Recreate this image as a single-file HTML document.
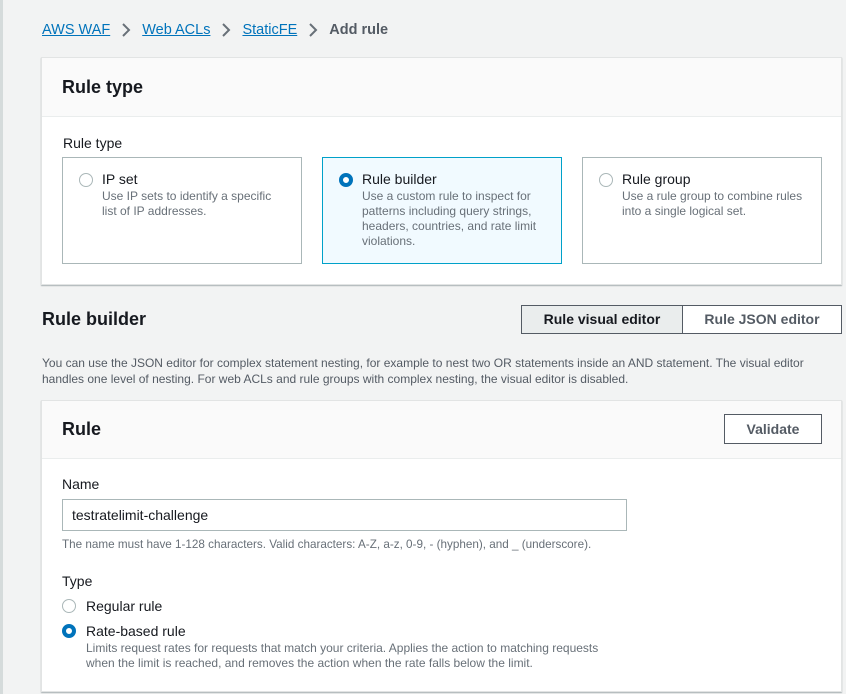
<!DOCTYPE html>
<html><head><style>
*{box-sizing:border-box;margin:0;padding:0}
body{width:846px;height:694px;overflow:hidden;background:#f2f3f3;font-family:"Liberation Sans",sans-serif;color:#16191f;position:relative}
.abs{position:absolute}
.lb{position:absolute;left:0;top:0;width:3px;height:694px;background:#d5dbdb}
.bc{left:42px;top:22px;font-size:14.5px;color:#0073bb;display:flex;align-items:center}
.bc a{text-decoration:underline;color:#0073bb}
.bc svg{margin:0 11px}
.bc b{color:#545b64}
.panel{background:#fff;border:1px solid #e2e4e4;box-shadow:0 1px 1px rgba(0,28,36,.3)}
.ph{background:#fafafa;border-bottom:1px solid #eaeded}
h2{font-size:18px;font-weight:bold}
.card{position:absolute;top:157px;width:240px;height:107px;border:1px solid #aab7b8;background:#fff}
.card.sel{border-color:#00a1c9;background:#f1faff}
.radio{position:absolute;width:14px;height:14px;border-radius:50%;border:1.5px solid #aab7b8;background:#fff}
.radio.on{border:4px solid #0073bb}
.ct{position:absolute;left:39px;top:13px;font-size:14px}
.cd{position:absolute;left:39px;top:31px;font-size:12px;color:#687078;line-height:15px;width:180px}
.btn{position:absolute;border:1px solid #545b64;font-size:14px;font-weight:bold;text-align:center;color:#545b64;background:#fff}
.small{font-size:12px;color:#687078}
</style></head><body>
<div class="lb"></div>
<div class="abs bc"><a>AWS WAF</a><svg width="10" height="14" viewBox="0 0 10 14"><path d="M2 1l6 6-6 6" fill="none" stroke="#687078" stroke-width="2"/></svg><a>Web ACLs</a><svg width="10" height="14" viewBox="0 0 10 14"><path d="M2 1l6 6-6 6" fill="none" stroke="#687078" stroke-width="2"/></svg><a>StaticFE</a><svg width="10" height="14" viewBox="0 0 10 14"><path d="M2 1l6 6-6 6" fill="none" stroke="#687078" stroke-width="2"/></svg><b>Add rule</b></div>

<div class="abs panel" style="left:41px;top:57px;width:801px;height:228px">
  <div class="ph" style="height:59px;padding:19px 20px"><h2>Rule type</h2></div>
  <div class="abs" style="left:21px;top:77px;font-size:14px">Rule type</div>
</div>
<div class="card" style="left:62px"><div class="radio" style="left:16px;top:15px"></div><div class="ct">IP set</div><div class="cd">Use IP sets to identify a specific list of IP addresses.</div></div>
<div class="card sel" style="left:322px"><div class="radio on" style="left:16px;top:15px"></div><div class="ct">Rule builder</div><div class="cd">Use a custom rule to inspect for patterns including query strings, headers, countries, and rate limit violations.</div></div>
<div class="card" style="left:582px"><div class="radio" style="left:16px;top:15px"></div><div class="ct">Rule group</div><div class="cd" style="width:195px">Use a rule group to combine rules into a single logical set.</div></div>

<div class="abs" style="left:42px;top:309px"><h2>Rule builder</h2></div>
<div class="btn" style="left:521px;top:305px;width:162px;height:29px;line-height:27px;background:#eaeded;color:#16191f">Rule visual editor</div>
<div class="btn" style="left:682px;top:305px;width:160px;height:29px;line-height:27px">Rule JSON editor</div>
<div class="abs small" style="left:42px;top:355px;width:800px;line-height:16px;color:#545b64">You can use the JSON editor for complex statement nesting, for example to nest two OR statements inside an AND statement. The visual editor handles one level of nesting. For web ACLs and rule groups with complex nesting, the visual editor is disabled.</div>

<div class="abs panel" style="left:41px;top:400px;width:801px;height:292px">
  <div class="ph" style="height:58px;padding:18px 20px"><h2>Rule</h2></div>
</div>
<div class="btn" style="left:724px;top:414px;width:98px;height:30px;line-height:28px">Validate</div>
<div class="abs" style="left:62px;top:476px;font-size:14px">Name</div>
<div class="abs" style="left:62px;top:499px;width:565px;height:32px;border:1px solid #aab7b8;background:#fff;font-size:14px;padding:7px 9px">testratelimit-challenge</div>
<div class="abs small" style="left:62px;top:538px;font-size:11.7px">The name must have 1-128 characters. Valid characters: A-Z, a-z, 0-9, - (hyphen), and _ (underscore).</div>
<div class="abs" style="left:62px;top:573px;font-size:14px">Type</div>
<div class="radio" style="left:62px;top:599px"></div>
<div class="abs" style="left:86px;top:598px;font-size:14px">Regular rule</div>
<div class="radio on" style="left:62px;top:624px"></div>
<div class="abs" style="left:86px;top:623px;font-size:14px">Rate-based rule</div>
<div class="abs small" style="left:86px;top:641px;line-height:15px;font-size:12px">Limits request rates for requests that match your criteria. Applies the action to matching requests<br>when the limit is reached, and removes the action when the rate falls below the limit.</div>
</body></html>
